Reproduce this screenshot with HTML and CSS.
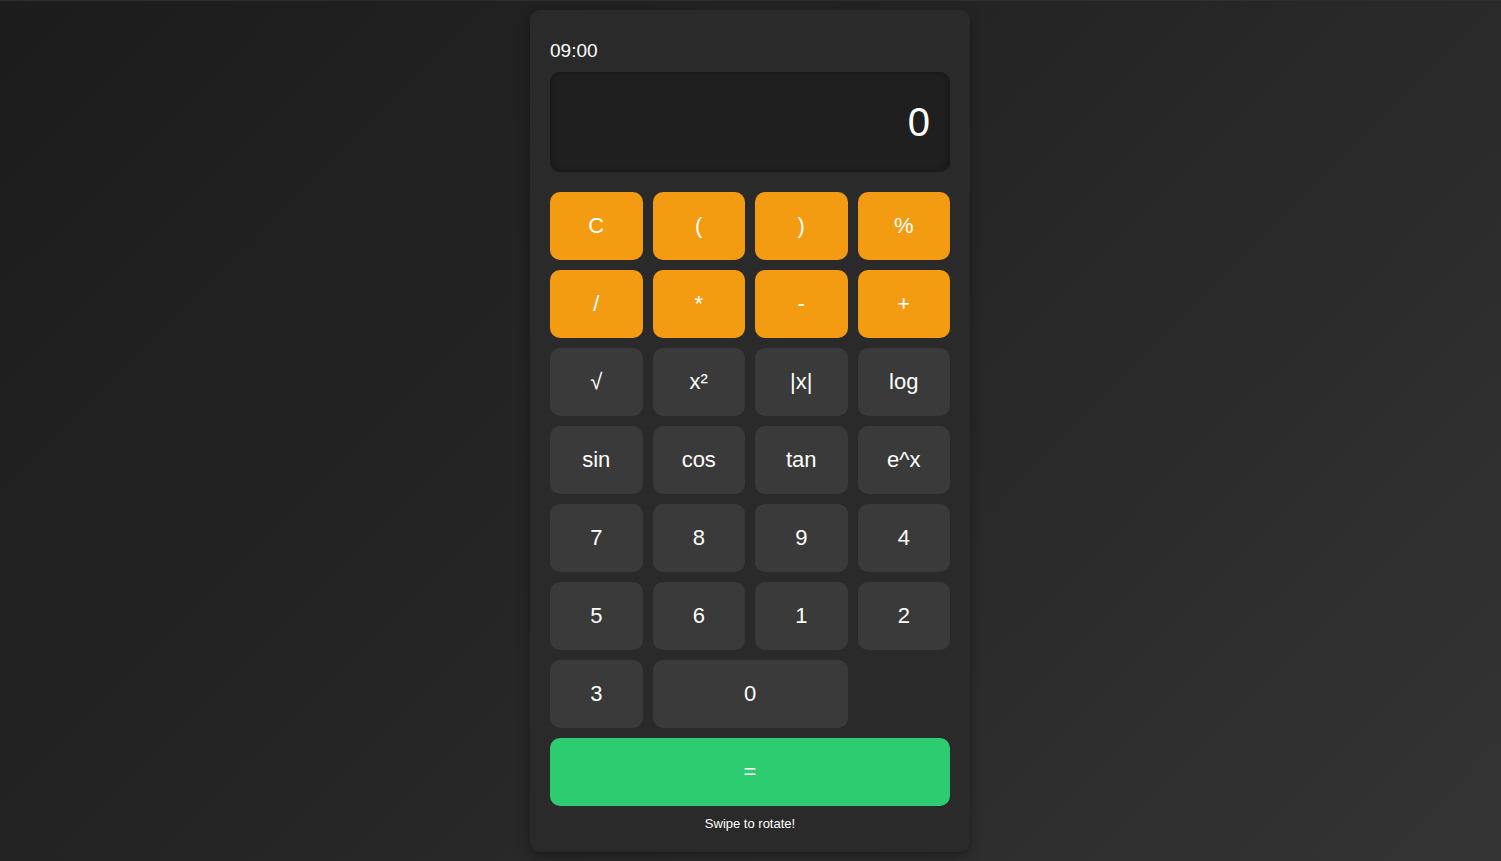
FILE: index.html
```html
<!DOCTYPE html>
<html lang="en">
<head>
<meta charset="utf-8">
<title>Calculator</title>
<link rel="stylesheet" href="styles.css">
</head>
<body>
<div class="calc">
  <div class="time">09:00</div>
  <div class="display">0</div>
  <div class="keys">
    <button class="key op">C</button>
    <button class="key op">(</button>
    <button class="key op">)</button>
    <button class="key op">%</button>
    <button class="key op">/</button>
    <button class="key op">*</button>
    <button class="key op">-</button>
    <button class="key op">+</button>
    <button class="key">√</button>
    <button class="key">x²</button>
    <button class="key">|x|</button>
    <button class="key">log</button>
    <button class="key">sin</button>
    <button class="key">cos</button>
    <button class="key">tan</button>
    <button class="key">e^x</button>
    <button class="key">7</button>
    <button class="key">8</button>
    <button class="key">9</button>
    <button class="key">4</button>
    <button class="key">5</button>
    <button class="key">6</button>
    <button class="key">1</button>
    <button class="key">2</button>
    <button class="key">3</button>
    <button class="key wide">0</button>
  </div>
  <button class="key equals">=</button>
  <div class="hint">Swipe to rotate!</div>
</div>
</body>
</html>
```
FILE: styles.css
```css
html, body {
  margin: 0;
  padding: 0;
  height: 100%;
}
body {
  background: linear-gradient(135deg, #1c1c1c 0%, #262626 50%, #343434 100%);
  font-family: "Liberation Sans", Arial, sans-serif;
  color: #fff;
  display: flex;
  justify-content: center;
  align-items: flex-start;
  border-top: 1px solid #2e2e2e;
  box-sizing: border-box;
  padding-right: 1px;
}
.calc {
  margin-top: 9px;
  width: 440px;
  box-sizing: border-box;
  padding: 20px;
  background: #2a2a2a;
  border-radius: 10px;
  box-shadow: 0 4px 12px rgba(0, 0, 0, 0.35);
  display: flex;
  flex-direction: column;
}
.time {
  font-size: 19px;
  line-height: 22px;
  margin-top: 10px;
  margin-bottom: 10px;
}
.display {
  height: 100px;
  box-sizing: border-box;
  background: #1f1f1f;
  border-radius: 10px;
  box-shadow: inset 0 0 6px rgba(0, 0, 0, 0.35);
  font-size: 40px;
  display: flex;
  align-items: center;
  justify-content: flex-end;
  padding: 0 20px;
  margin-bottom: 20px;
}
.keys {
  display: grid;
  grid-template-columns: repeat(4, 1fr);
  grid-auto-rows: 68px;
  gap: 10px;
}
.key {
  border: none;
  border-radius: 10px;
  background: #3a3a3a;
  color: #fff;
  font-family: "Liberation Sans", Arial, sans-serif;
  font-size: 22px;
  padding: 0;
  margin: 0;
}
.key.op {
  background: #f39c12;
}
.key.wide {
  grid-column: span 2;
}
.key.equals {
  margin-top: 10px;
  height: 68px;
  background: #2ecc71;
}
.hint {
  font-size: 13px;
  line-height: 16px;
  text-align: center;
  margin-top: 10px;
}
```
